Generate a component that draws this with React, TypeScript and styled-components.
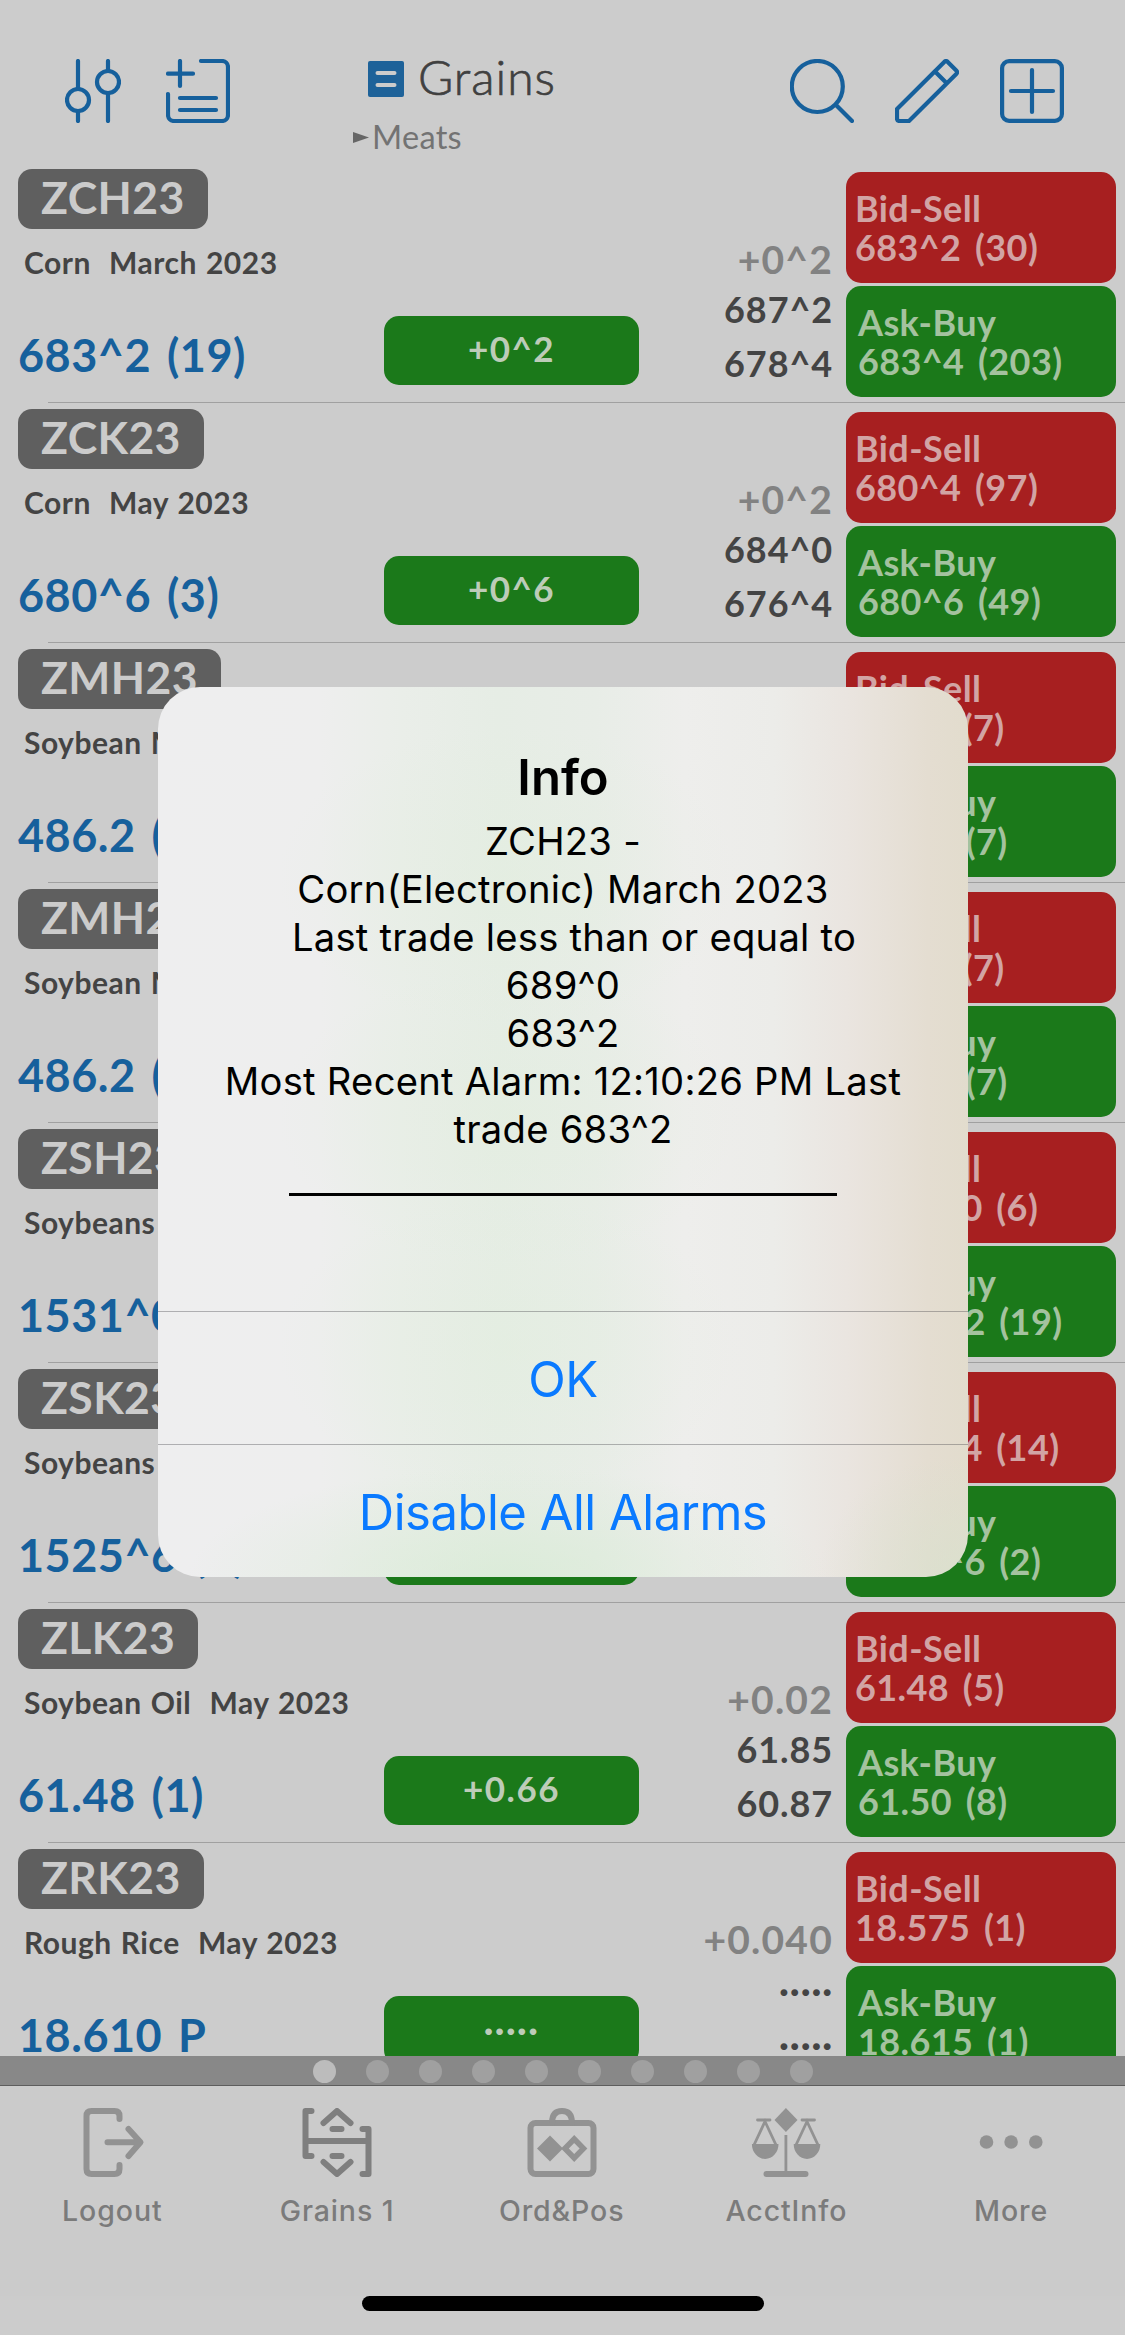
import React from "react";
import styled, { createGlobalStyle } from "styled-components";

const Global = createGlobalStyle`
  body { margin: 0; background: #ccc; }
  *, *::before { box-sizing: border-box; }
  button { appearance: none; border: 0; background: none; padding: 0; margin: 0; font: inherit; letter-spacing: inherit; color: inherit; text-align: inherit; }
  svg { display: block; flex: none; }
`;

const QUOTE_FONT = `Lato, "Open Sans", sans-serif`;
const SYSTEM_FONT = `Inter, Roboto, sans-serif`;

const BLUE = "#16609c";
const RED = "#a71f20";
const GREEN = "#1b791a";

const Screen = styled.div`
  position: relative;
  width: 1125px;
  height: 2335px;
  display: flex;
  flex-direction: column;
  overflow: hidden;
  background: #cccccc;
  font-family: ${QUOTE_FONT};
  white-space: pre;
`;

const Header = styled.header`
  flex: none;
  height: 163px;
  display: grid;
  grid-template-columns: 353px 1fr 335px;
  padding-top: 59px;
`;

const Tools = styled.div<{ $gap: number; $left?: number }>`
  display: flex;
  align-items: flex-start;
  gap: ${(p) => p.$gap}px;
  padding-left: ${(p) => p.$left ?? 0}px;
`;

const Title = styled.div`
  display: flex;
  flex-direction: column;
`;

const TitleMain = styled.div`
  display: flex;
  align-items: center;
  gap: 14px;
  padding-left: 15px;
  height: 40px;
`;

const TitleText = styled.span`
  padding-bottom: 5px;
  font-size: 48px;
  line-height: 40px;
  font-weight: 300;
  color: #404040;
  letter-spacing: 1px;
  -webkit-text-stroke: 0.7px #404040;
`;

const TitleNext = styled.div`
  display: flex;
  align-items: center;
  gap: 3px;
  margin-top: 18px;
  height: 40px;
  line-height: 38px;
  font-size: 32.5px;
  letter-spacing: 0.3px;
  color: #737373;
`;

const List = styled.main`
  flex: none;
  height: 1893px;
  overflow: hidden;
`;

const Row = styled.section`
  position: relative;
  height: 240px;
  display: grid;
  grid-template-columns: 384px 255px 192px 285px;
  &::before {
    content: "";
    position: absolute;
    left: 48px;
    right: 0;
    bottom: 0;
    height: 1px;
    background: #a0a0a0;
  }
`;

const Contract = styled.div`
  display: flex;
  flex-direction: column;
  align-items: flex-start;
  padding: 6px 0 0 18px;
`;

const Symbol = styled.div`
  height: 60px;
  padding: 0 23px;
  border-radius: 14px;
  background: #5f5f5f;
  color: #cbcbcb;
  font-size: 44.5px;
  line-height: 55px;
  font-weight: 700;
  letter-spacing: 0.4px;
`;

const Name = styled.div`
  margin: 13px 0 0 6px;
  height: 40px;
  line-height: 40px;
  font-size: 30px;
  font-weight: 700;
  letter-spacing: 0.5px;
  word-spacing: 1.3px;
  color: #444;
`;

const LastPrice = styled.div`
  margin-top: 43px;
  height: 60px;
  line-height: 60px;
  font-size: 45px;
  font-weight: 700;
  letter-spacing: 0.5px;
  word-spacing: 4.5px;
  color: ${BLUE};
`;

const Change = styled.div`
  align-self: start;
  margin-top: 153px;
  height: 69px;
  border-radius: 15px;
  background: ${GREEN};
  color: #bdccb8;
  font-size: 35px;
  line-height: 65px;
  font-weight: 700;
  letter-spacing: 1.5px;
  text-align: center;
`;

const Range = styled.div`
  display: flex;
  flex-direction: column;
  align-items: flex-end;
  padding-top: 71px;
`;

const Tick = styled.span`
  height: 48px;
  margin-right: -2px;
  line-height: 50px;
  font-size: 39px;
  font-weight: 700;
  letter-spacing: 1.2px;
  color: #828282;
`;

const Extreme = styled.span`
  height: 54px;
  margin-right: -2px;
  line-height: 54px;
  font-size: 36px;
  font-weight: 700;
  letter-spacing: 0.9px;
  color: #444;
`;

const Depth = styled.div`
  display: flex;
  flex-direction: column;
  gap: 3px;
  padding: 9px 0 0 15px;
`;

const Side = styled.button<{ $buy?: boolean }>`
  width: 270px;
  height: 111px;
  border-radius: 15px;
  padding: ${(p) => (p.$buy ? "17px 0 0 12px" : "17px 0 0 9px")};
  display: flex;
  flex-direction: column;
  background: ${(p) => (p.$buy ? GREEN : RED)};
  color: ${(p) => (p.$buy ? "#a4c29f" : "#d2a4a4")};
  font-size: 36px;
  line-height: 39px;
  font-weight: 700;
  letter-spacing: 0.4px;
  word-spacing: 4.5px;
`;

const Pager = styled.div`
  flex: none;
  height: 30px;
  display: flex;
  justify-content: center;
  align-items: center;
  gap: 30px;
  padding-top: 1px;
  background: #888;
  border-bottom: 1px solid #5d5d5d;
`;

const PageDot = styled.span<{ $on?: boolean }>`
  width: 23px;
  height: 23px;
  border-radius: 50%;
  background: ${(p) => (p.$on ? "#bcbcbc" : "#a0a0a0")};
`;

const TabBar = styled.nav`
  flex: none;
  height: 210px;
  display: grid;
  grid-template-columns: repeat(5, 224.7px);
  padding-top: 22px;
  background: #cbcbcb;
`;

const Tab = styled.button<{ $on?: boolean }>`
  display: flex;
  flex-direction: column;
  align-items: center;
  gap: 14px;
  height: 130px;
  font-family: ${SYSTEM_FONT};
  font-size: 28.5px;
  line-height: 40px;
  font-weight: 500;
  letter-spacing: 0.9px;
  color: #7b7b7b;
  svg { color: ${(p) => (p.$on ? "#7f7f7f" : "#929292")}; }
`;

const HomeIndicator = styled.div`
  position: absolute;
  left: 362px;
  bottom: 24px;
  width: 402px;
  height: 15px;
  border-radius: 8px;
  background: #000;
`;

const Alert = styled.div`
  position: absolute;
  left: 158px;
  top: 687px;
  width: 810px;
  height: 890px;
  border-radius: 42px;
  overflow: hidden;
  display: flex;
  flex-direction: column;
  font-family: ${SYSTEM_FONT};
  background:
    radial-gradient(ellipse 320px 110px at 350px 890px, rgba(216, 235, 213, 0.75), rgba(216, 235, 213, 0)),
    radial-gradient(ellipse 230px 150px at 350px 190px, rgba(225, 238, 221, 0.45), rgba(225, 238, 221, 0)),
    radial-gradient(ellipse 230px 150px at 350px 430px, rgba(225, 238, 221, 0.45), rgba(225, 238, 221, 0)),
    radial-gradient(ellipse 230px 150px at 350px 660px, rgba(225, 238, 221, 0.45), rgba(225, 238, 221, 0)),
    radial-gradient(ellipse 140px 120px at 800px 890px, rgba(216, 225, 205, 0.7), rgba(216, 225, 205, 0)),
    linear-gradient(90deg, #eeeeef 0%, #eeeeee 20%, #eaeee9 30%, #e6ede5 42%, #e8ede7 54%, #eeeeec 65%, #ecece9 76%, #eae5e0 85%, #e4ddd1 95%, #e2dccd 100%);
`;

const AlertBody = styled.div`
  height: 624px;
  padding-top: 61px;
  display: flex;
  flex-direction: column;
  align-items: center;
  color: #000;
`;

const AlertTitle = styled.h1`
  margin: 0;
  height: 60px;
  font-size: 49px;
  line-height: 60px;
  font-weight: 600;
`;

const AlertText = styled.p`
  margin: 9px 0 0;
  font-size: 38.2px;
  line-height: 48px;
  letter-spacing: 0.25px;
  text-align: center;
  white-space: pre;
`;

const AlertRule = styled.div`
  width: 548px;
  height: 3px;
  margin-top: 40px;
  background: #000;
`;

const AlertButton = styled.button`
  height: 133px;
  padding-top: 1px;
  border-top: 1px solid rgba(60, 60, 67, 0.36);
  color: #0a7aff;
  font-size: 49px;
  line-height: 134px;
  letter-spacing: -0.5px;
  text-align: center;
`;

const blueStroke = { fill: "none", stroke: BLUE, strokeWidth: 4.2, strokeLinecap: "round" as const, strokeLinejoin: "round" as const };
const grayStroke = { fill: "none", stroke: "currentColor", strokeWidth: 6, strokeLinecap: "round" as const, strokeLinejoin: "round" as const };

const SlidersIcon = () => (
  <svg width="56" height="64" viewBox="65 59 56 64" {...blueStroke}>
    <path d="M78 61V88M78 112V121M108 61V70M108 94V121" />
    <circle cx="78" cy="100" r="11" />
    <circle cx="108" cy="82" r="11" />
  </svg>
);

const NewListIcon = () => (
  <svg width="64" height="64" viewBox="166 59 64 64" {...blueStroke}>
    <path d="M180 61V86M168 73.7H193M201 61H222a6 6 0 0 1 6 6V115a6 6 0 0 1-6 6H174a6 6 0 0 1-6-6V94M180 98H216M180 110H216" />
  </svg>
);

const SearchIcon = () => (
  <svg width="64" height="64" viewBox="790 59 64 64" {...blueStroke}>
    <circle cx="817.3" cy="86.5" r="25.5" />
    <path d="M836.5 105.5L852 121" />
  </svg>
);

const PencilIcon = () => (
  <svg width="64" height="64" viewBox="895 59 64 64" {...blueStroke}>
    <path d="M897 109L944.5 61.7Q946 60.5 947.5 61.7L956.5 70.7Q957.7 72.2 956.5 73.7L909 121H899.5Q897 121 897 118.5ZM935 71.5L946.5 83" />
  </svg>
);

const AddIcon = () => (
  <svg width="64" height="64" viewBox="1000 59 64 64" {...blueStroke}>
    <rect x="1002.1" y="61.1" width="59.8" height="59.8" rx="7" />
    <path d="M1032 70V112M1011 91H1053" />
  </svg>
);

const BookIcon = () => (
  <svg width="36" height="36" viewBox="0 0 36 36">
    <rect width="36" height="36" rx="2" fill="#1e6299" />
    <path d="M9.5 12H26.5M9.5 24H26.5" stroke="#ccc" strokeWidth="4" strokeLinecap="round" />
  </svg>
);

const NextMark = () => (
  <svg width="16" height="11" viewBox="0 0 16 11">
    <path d="M0 0L16 5.5L0 11Z" fill="#666" />
  </svg>
);

const LogoutIcon = () => (
  <svg width="72" height="69" viewBox="76.5 2108 72 69" {...grayStroke}>
    <path d="M120 2119V2116Q120 2111 115 2111H92Q87 2111 87 2116V2169Q87 2174 92 2174H115Q120 2174 120 2169V2165M108 2142.3H140M129 2129L141 2142.3L129 2156" />
  </svg>
);

const QuotesIcon = () => (
  <svg width="72" height="69" viewBox="301.5 2108 72 69" {...grayStroke}>
    <path d="M312 2111H306V2156H312M363 2129H369V2174H363M306 2141H369" />
    <path d="M324 2123L337.5 2111L351 2123M333 2129H342M333 2156H342M324 2162L337.5 2174L351 2162" />
  </svg>
);

const OrdersIcon = () => (
  <svg width="72" height="69" viewBox="525.5 2108 72 69" {...grayStroke}>
    <rect x="530" y="2123" width="63" height="51" rx="5" />
    <path d="M551.5 2123Q551.5 2111 561.5 2111Q571.5 2111 571.5 2123" />
    <path d="M549.5 2135.5L562.5 2148.5L549.5 2161.5L536.5 2148.5Z" fill="currentColor" stroke="none" />
    <path d="M573.7 2139L583 2148.5L573.7 2158L564.4 2148.5Z" strokeWidth="5.5" strokeLinejoin="miter" />
  </svg>
);

const AccountIcon = () => (
  <svg width="72" height="69" viewBox="751.5 2108 72 69" fill="none" stroke="currentColor" strokeWidth="2.8">
    <path d="M787.4 2108L799 2120L787.4 2132L776 2120Z" fill="currentColor" stroke="none" />
    <path d="M759 2120H771.5M803.5 2120H816" strokeLinecap="round" />
    <path d="M755.5 2145L766.5 2121.5L777.5 2145M797.5 2145L808.5 2121.5L819.5 2145M787.4 2135V2172" />
    <path d="M753.4 2144H780a13.3 15 0 0 1-26.6 0ZM795.2 2144H821.8a13.3 15 0 0 1-26.6 0Z" fill="currentColor" stroke="none" />
    <path d="M768 2174H807" strokeWidth="6" strokeLinecap="round" />
  </svg>
);

const MoreIcon = () => (
  <svg width="72" height="69" viewBox="975.5 2108 72 69" fill="currentColor">
    <circle cx="987" cy="2142" r="6.8" />
    <circle cx="1011.6" cy="2142" r="6.8" />
    <circle cx="1036.3" cy="2142" r="6.8" />
  </svg>
);

interface Quote {
  symbol: string;
  name: string;
  last: string;
  change: string;
  tick: string;
  high: string;
  low: string;
  bid: string;
  ask: string;
}

const EMPTY = "·····";

const quotes: Quote[] = [
  { symbol: "ZCH23", name: "Corn  March 2023", last: "683^2 (19)", change: "+0^2", tick: "+0^2", high: "687^2", low: "678^4", bid: "683^2 (30)", ask: "683^4 (203)" },
  { symbol: "ZCK23", name: "Corn  May 2023", last: "680^6 (3)", change: "+0^6", tick: "+0^2", high: "684^0", low: "676^4", bid: "680^4 (97)", ask: "680^6 (49)" },
  { symbol: "ZMH23", name: "Soybean Meal  March 2023", last: "486.2 (1)", change: "+1.2", tick: "+0.1", high: "488.9", low: "482.1", bid: "486.1 (7)", ask: "486.3 (7)" },
  { symbol: "ZMH23", name: "Soybean Meal  March 2023", last: "486.2 (1)", change: "+1.2", tick: "+0.1", high: "488.9", low: "482.1", bid: "486.1 (7)", ask: "486.3 (7)" },
  { symbol: "ZSH23", name: "Soybeans  March 2023", last: "1531^0 (1)", change: "+3^6", tick: "+0^2", high: "1536^4", low: "1521^0", bid: "1531^0 (6)", ask: "1531^2 (19)" },
  { symbol: "ZSK23", name: "Soybeans  May 2023", last: "1525^6 (1)", change: "+3^6", tick: "+0^2", high: "1530^4", low: "1516^0", bid: "1525^4 (14)", ask: "1525^6 (2)" },
  { symbol: "ZLK23", name: "Soybean Oil  May 2023", last: "61.48 (1)", change: "+0.66", tick: "+0.02", high: "61.85", low: "60.87", bid: "61.48 (5)", ask: "61.50 (8)" },
  { symbol: "ZRK23", name: "Rough Rice  May 2023", last: "18.610 P", change: EMPTY, tick: "+0.040", high: EMPTY, low: EMPTY, bid: "18.575 (1)", ask: "18.615 (1)" },
];

const tabs = [
  { label: "Logout", Icon: LogoutIcon },
  { label: "Grains 1", Icon: QuotesIcon, on: true },
  { label: "Ord&Pos", Icon: OrdersIcon },
  { label: "AcctInfo", Icon: AccountIcon },
  { label: "More", Icon: MoreIcon },
];

const alertLines = [
  "ZCH23 -",
  "Corn(Electronic) March 2023",
  "  Last trade less than or equal to",
  "689^0",
  "683^2",
  "Most Recent Alarm: 12:10:26 PM Last",
  "trade 683^2",
];

const QuoteRow = ({ q }: { q: Quote }) => (
  <Row>
    <Contract>
      <Symbol>{q.symbol}</Symbol>
      <Name>{q.name}</Name>
      <LastPrice>{q.last}</LastPrice>
    </Contract>
    <Change>{q.change}</Change>
    <Range>
      <Tick>{q.tick}</Tick>
      <Extreme>{q.high}</Extreme>
      <Extreme>{q.low}</Extreme>
    </Range>
    <Depth>
      <Side>
        <span>Bid-Sell</span>
        <span>{q.bid}</span>
      </Side>
      <Side $buy>
        <span>Ask-Buy</span>
        <span>{q.ask}</span>
      </Side>
    </Depth>
  </Row>
);

export default function App() {
  return (
    <Screen>
      <Global />
      <Header>
        <Tools $gap={45} $left={65}>
          <SlidersIcon />
          <NewListIcon />
        </Tools>
        <Title>
          <TitleMain>
            <BookIcon />
            <TitleText>Grains</TitleText>
          </TitleMain>
          <TitleNext>
            <NextMark />
            Meats
          </TitleNext>
        </Title>
        <Tools $gap={41}>
          <SearchIcon />
          <PencilIcon />
          <AddIcon />
        </Tools>
      </Header>
      <List>
        {quotes.map((q, i) => (
          <QuoteRow key={i} q={q} />
        ))}
      </List>
      <Pager>
        {Array.from({ length: 10 }, (_, i) => (
          <PageDot key={i} $on={i === 0} />
        ))}
      </Pager>
      <TabBar>
        {tabs.map(({ label, Icon, on }) => (
          <Tab key={label} $on={on}>
            <Icon />
            {label}
          </Tab>
        ))}
      </TabBar>
      <HomeIndicator />
      <Alert role="alertdialog">
        <AlertBody>
          <AlertTitle>Info</AlertTitle>
          <AlertText>{alertLines.join("\n")}</AlertText>
          <AlertRule />
        </AlertBody>
        <AlertButton>OK</AlertButton>
        <AlertButton>Disable All Alarms</AlertButton>
      </Alert>
    </Screen>
  );
}
